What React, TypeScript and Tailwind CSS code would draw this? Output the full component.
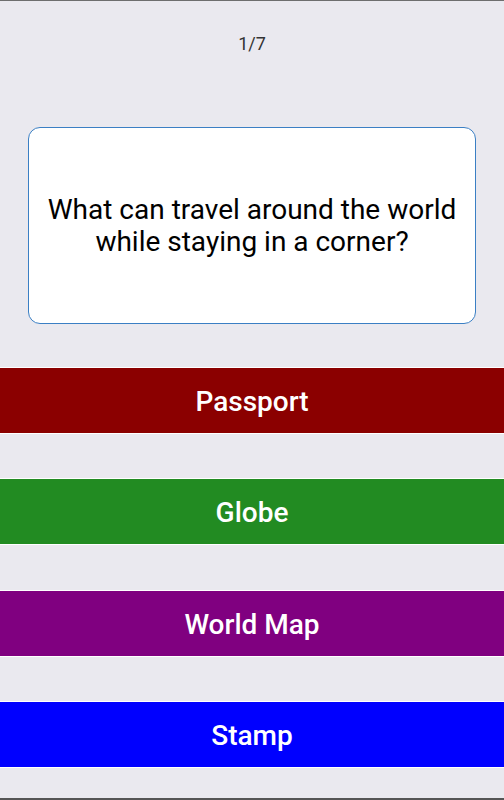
import React from "react";

const answers = [
  { label: "Passport", color: "bg-[#8b0000]" },
  { label: "Globe", color: "bg-[#228b22]" },
  { label: "World Map", color: "bg-[#800080]" },
  { label: "Stamp", color: "bg-[#0000ff]" },
];

export default function App() {
  return (
    <div
      className="flex h-[800px] w-full flex-col border-t border-b-2 border-t-[#6e6e6e] border-b-[#555] bg-[#eae9ef]"
      style={{ fontFamily: "Roboto, 'Noto Sans', sans-serif" }}
    >
      <div className="mt-[29px] text-center text-[18px] leading-[27px] text-[#333]">1/7</div>

      <div className="mx-[28px] mt-[70px] flex h-[197px] items-center justify-center rounded-[12px] border border-[#3b7fc4] bg-white px-3">
        <p className="text-center text-[28px] leading-[32px] text-black">
          What can travel around the world while staying in a corner?
        </p>
      </div>

      <div className="mt-[43px] flex flex-col gap-[44.3px]">
        {answers.map((a) => (
          <button
            key={a.label}
            className={`flex h-[67px] w-full items-center justify-center border-y border-white pt-[3px] ${a.color} text-[28px] font-medium text-white`}
          >
            {a.label}
          </button>
        ))}
      </div>
    </div>
  );
}
